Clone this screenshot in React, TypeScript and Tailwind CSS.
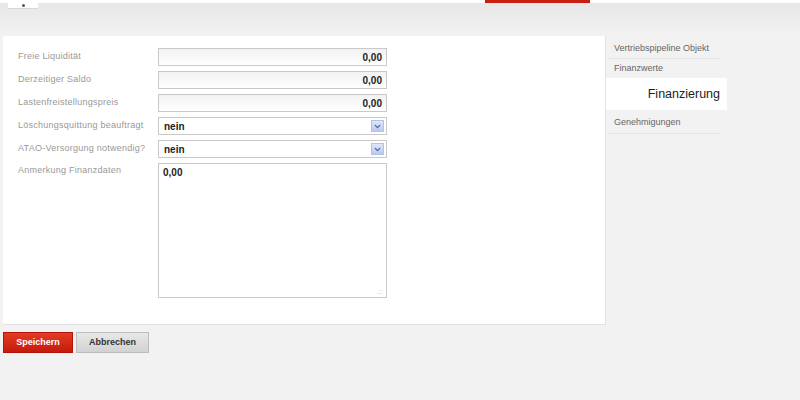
import { ChevronDown } from "lucide-react";

const font = { fontFamily: '"Liberation Sans", Arial, sans-serif' };

function NumField({ label }: { label: string }) {
  return (
    <div className="flex items-center h-[18px]">
      <div className="w-[140px] text-[9px] text-[#999] tracking-[0.25px]">{label}</div>
      <div className="w-[229px] h-[18px] border border-[#c9c9c9] bg-gradient-to-b from-[#f2f2f2] to-white flex items-center justify-end pr-[4px] text-[10px] font-bold text-[#222]">
        0,00
      </div>
    </div>
  );
}

function SelectField({ label }: { label: string }) {
  return (
    <div className="flex items-center h-[18px]">
      <div className="w-[140px] text-[9px] text-[#999] tracking-[0.25px]">{label}</div>
      <div className="w-[229px] h-[18px] border border-[#c9c9c9] bg-white flex items-center justify-between pl-[5px] pr-[2px] text-[10px] font-bold text-[#222]">
        <span>nein</span>
        <span className="w-[13px] h-[12px] bg-gradient-to-b from-[#dfe6f7] to-[#b9c8ee] border border-[#b4c2e4] flex items-center justify-center">
          <ChevronDown size={9} strokeWidth={3.5} className="text-[#4a64a8]" />
        </span>
      </div>
    </div>
  );
}

export default function App() {
  return (
    <div className="w-[800px] h-[400px] bg-[#f2f2f2] overflow-hidden" style={font}>
      {/* top bar */}
      <div className="h-[36px] bg-gradient-to-b from-[#e6e6e6] to-[#f2f2f2] relative">
        <div className="h-[3px] bg-white flex">
          <div className="ml-[485px] w-[105px] h-[3px] bg-[#c8200e]" />
        </div>
        <div className="absolute left-[8px] top-0 w-[30px] h-[9px] bg-white border-b border-[#d8d8d8] flex justify-center">
          <div className="mt-[4px] w-[3px] h-[3px] rounded-full bg-[#555]" />
        </div>
      </div>

      <div className="flex">
        {/* form panel */}
        <div className="ml-[3px] w-[603px] h-[289px] bg-white border-r border-b border-[#e2e2e2] pl-[15px] pt-[12px] flex flex-col gap-[5px]">
          <NumField label="Freie Liquidität" />
          <NumField label="Derzeitiger Saldo" />
          <NumField label="Lastenfreistellungspreis" />
          <SelectField label="Löschungsquittung beauftragt" />
          <SelectField label="ATAO-Versorgung notwendig?" />
          <div className="flex">
            <div className="w-[140px] text-[9px] text-[#999] tracking-[0.25px] pt-[1px]">Anmerkung Finanzdaten</div>
            <div className="w-[229px] h-[135px] border border-[#c9c9c9] bg-white relative px-[4px] pt-[1px] text-[10px] font-bold text-[#222]">
              0,00
              <span className="absolute right-[3px] bottom-[2px] text-[7px] text-[#bbb] font-normal leading-none">.::</span>
            </div>
          </div>
        </div>

        {/* side nav */}
        <div className="w-[121px] pt-[4px] flex flex-col">
          <div className="ml-[2px] w-[112px] h-[19px] border-b border-[#e4e4e4] pl-[6px] flex items-center text-[9px] text-[#666]">
            Vertriebspipeline Objekt
          </div>
          <div className="ml-[2px] w-[112px] h-[19px] pl-[6px] flex items-center text-[9px] text-[#666]">
            Finanzwerte
          </div>
          <div className="w-[121px] h-[32px] bg-white flex items-center justify-end pr-[7px] text-[12.5px] text-[#222]">
            Finanzierung
          </div>
          <div className="ml-[2px] w-[112px] h-[24px] border-b border-[#e4e4e4] pl-[6px] pt-[3px] flex items-center text-[9px] text-[#666]">
            Genehmigungen
          </div>
        </div>
      </div>

      {/* buttons */}
      <div className="flex gap-[3px] ml-[3px] mt-[7px]">
        <button className="w-[70px] h-[21px] bg-gradient-to-b from-[#e43a22] to-[#c41a0c] border border-[#b51508] text-white text-[9px] font-bold">
          Speichern
        </button>
        <button className="w-[73px] h-[21px] bg-gradient-to-b from-[#e8e8e8] to-[#d2d2d2] border border-[#bdbdbd] text-[#333] text-[9px] font-bold">
          Abbrechen
        </button>
      </div>
    </div>
  );
}
